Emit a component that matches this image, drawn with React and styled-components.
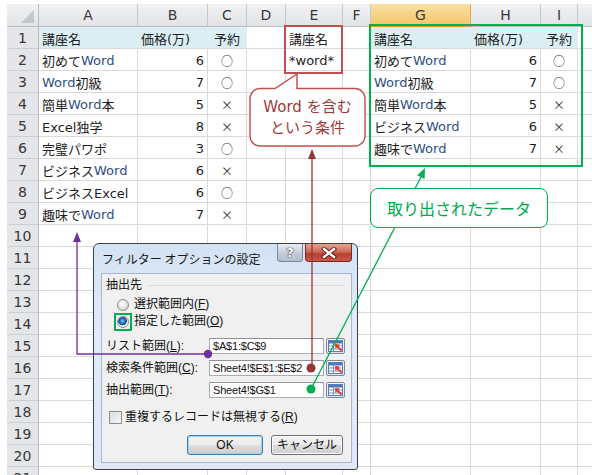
import React from 'react';
import styled, { createGlobalStyle } from 'styled-components';

const GlobalStyle = createGlobalStyle`
  html, body {
    margin: 0;
    padding: 0;
    background: #fff;
  }
  body {
    font-family: "DejaVu Sans", "Noto Sans CJK JP", sans-serif;
  }
`;

const columns = ['A', 'B', 'C', 'D', 'E', 'F', 'G', 'H', 'I', 'J'];

const sheet = {
  1: { A: '講座名', B: '価格(万)', C: '予約', E: '講座名', G: '講座名', H: '価格(万)', I: '予約' },
  2: { A: '初めてWord', B: '6', C: '○', E: '*word*', G: '初めてWord', H: '6', I: '○' },
  3: { A: 'Word初級', B: '7', C: '○', G: 'Word初級', H: '7', I: '○' },
  4: { A: '簡単Word本', B: '5', C: '×', G: '簡単Word本', H: '5', I: '×' },
  5: { A: 'Excel独学', B: '8', C: '×', G: 'ビジネスWord', H: '6', I: '×' },
  6: { A: '完璧パワポ', B: '3', C: '○', G: '趣味でWord', H: '7', I: '×' },
  7: { A: 'ビジネスWord', B: '6', C: '×' },
  8: { A: 'ビジネスExcel', B: '6', C: '○' },
  9: { A: '趣味でWord', B: '7', C: '×' },
};

const tableCols = { A: true, B: true, C: true, G: true, H: true, I: true };
const markCols = { C: true, I: true };
const numberCols = { B: true, H: true };

const fields = [
  { label: 'リスト範囲', key: 'L', value: '$A$1:$C$9' },
  { label: '検索条件範囲', key: 'C', value: 'Sheet4!$E$1:$E$2' },
  { label: '抽出範囲', key: 'T', value: 'Sheet4!$G$1' },
];

// formats "Word" the way the sheet shows it
const CellText = ({ text }) =>
  text.split(/(Word)/).map((part, i) =>
    part === 'Word' ? <WordPart key={i}>{part}</WordPart> : <span key={i}>{part}</span>
  );

const cellAlign = (col, row) => {
  if (markCols[col]) return 'center';
  if (numberCols[col] && row > 1) return 'flex-end';
  return 'flex-start';
};

const Spreadsheet = () => {
  const rows = Array.from({ length: 21 }, (_, i) => i + 1);
  return (
    <Sheet>
      <Corner />
      {columns.map((c) => (
        <ColHeader key={c} $active={c === 'G'}>{c}</ColHeader>
      ))}
      {rows.map((r) => (
        <React.Fragment key={r}>
          <RowHeader>{r}</RowHeader>
          {columns.map((c) => {
            const value = sheet[r] && sheet[r][c];
            const filled = r === 1 && tableCols[c];
            return (
              <Cell key={c} $align={cellAlign(c, r)} $filled={filled}>
                {value && (markCols[c] && r > 1
                  ? <Mark>{value}</Mark>
                  : <CellText text={value} />)}
              </Cell>
            );
          })}
        </React.Fragment>
      ))}
    </Sheet>
  );
};

const RangeIcon = () => (
  <svg width="15" height="12" viewBox="0 0 15 12">
    <rect x="0.5" y="0.5" width="14" height="11" fill="#fff" stroke="#5b7fb8" />
    <rect x="1" y="1" width="13" height="2.5" fill="#4d78c0" />
    <line x1="1" y1="6" x2="14" y2="6" stroke="#6f93cc" />
    <line x1="1" y1="9" x2="14" y2="9" stroke="#6f93cc" />
    <line x1="5.5" y1="3" x2="5.5" y2="11.5" stroke="#6f93cc" />
    <path d="M8 5 L13.5 10.5" stroke="#e0402a" strokeWidth="2" />
    <path d="M7 4 L12 4.5 L7.5 9 Z" fill="#e0402a" />
  </svg>
);

const FilterDialog = () => (
  <Dialog>
    <TitleBar>
      <TitleText>フィルター オプションの設定</TitleText>
      <TitleButtons>
        <HelpButton>?</HelpButton>
        <CloseButton>
          <svg width="16" height="12" viewBox="0 0 16 12">
            <path d="M3 2 L13 10 M13 2 L3 10" stroke="#5a1d16" strokeWidth="4.2" strokeLinecap="square" />
            <path d="M3 2 L13 10 M13 2 L3 10" stroke="#fff" strokeWidth="2.4" strokeLinecap="square" />
          </svg>
        </CloseButton>
      </TitleButtons>
    </TitleBar>
    <DialogBody>
      <Legend>
        <span>抽出先</span>
        <LegendRule />
      </Legend>
      <RadioList>
        <RadioRow>
          <Radio />
          <span>選択範囲内(<u>F</u>)</span>
        </RadioRow>
        <RadioRow>
          <Radio $checked $highlight />
          <span>指定した範囲(<u>O</u>)</span>
        </RadioRow>
      </RadioList>
      <Fields>
        {fields.map((f) => (
          <FieldRow key={f.key}>
            <FieldLabel>
              {f.label}(<u>{f.key}</u>):
            </FieldLabel>
            <RangeInput>{f.value}</RangeInput>
            <RangeButton>
              <RangeIcon />
            </RangeButton>
          </FieldRow>
        ))}
      </Fields>
      <CheckRow>
        <Checkbox />
        <span>重複するレコードは無視する(<u>R</u>)</span>
      </CheckRow>
      <ButtonRow>
        <PushButton $primary>OK</PushButton>
        <PushButton>キャンセル</PushButton>
      </ButtonRow>
    </DialogBody>
  </Dialog>
);

const Connectors = () => (
  <Lines width="592" height="475" viewBox="0 0 592 475">
    <polyline points="208,354 77,354 77,241" fill="none" stroke="#7030a0" strokeWidth="1.3" />
    <path d="M77 232 L73 242 L81 242 Z" fill="#7030a0" />
    <circle cx="208" cy="354" r="4.2" fill="#7030a0" />

    <line x1="312" y1="368" x2="312" y2="158" stroke="#953735" strokeWidth="1.3" />
    <path d="M312 149 L308 159 L316 159 Z" fill="#953735" />
    <circle cx="311" cy="368" r="4.5" fill="#953735" />

    <line x1="311" y1="389" x2="421" y2="177" stroke="#00b050" strokeWidth="1.3" />
    <path d="M425 168 L424.6 179 L417.2 175.2 Z" fill="#00b050" />
    <circle cx="311" cy="389" r="4.5" fill="#00b050" />
  </Lines>
);

export default function App() {
  return (
    <>
      <GlobalStyle />
      <Page>
        <Spreadsheet />
        <CriteriaBox />
        <ResultBox />
        <FilterDialog />
        <Connectors />
        <ConditionCallout>
          <svg width="120" height="78" viewBox="0 0 120 78">
            <path
              d="M11 16.5 H26 L48 2 V16.5 H106 A10 10 0 0 1 116 26.5 V64 A10 10 0 0 1 106 74 H11 A10 10 0 0 1 1 64 V26.5 A10 10 0 0 1 11 16.5 Z"
              fill="#fff"
              stroke="#c0504d"
              strokeWidth="1.4"
            />
          </svg>
          <CalloutText>
            <div>Word を含む</div>
            <div>という条件</div>
          </CalloutText>
        </ConditionCallout>
        <ResultCallout>取り出されたデータ</ResultCallout>
      </Page>
    </>
  );
}

const Page = styled.div`
  position: relative;
  width: 592px;
  height: 475px;
  overflow: hidden;
  padding: 4px 0 0 7px;
  box-sizing: border-box;
  background: #fff;
`;

const Sheet = styled.div`
  display: grid;
  grid-template-columns: 32px 99px 70px 39px 39px 57px 28px 100px 70px 37px 80px;
  grid-template-rows: 23px repeat(21, 22px);
  font-size: 13px;
  color: #1e1e1e;
`;

const Corner = styled.div`
  position: relative;
  background: linear-gradient(#f0f1f3, #e2e4e7);
  border-right: 1px solid #b9bdc2;
  border-bottom: 1px solid #b9bdc2;

  &::after {
    content: '';
    position: absolute;
    right: 4px;
    bottom: 3px;
    border-style: solid;
    border-width: 0 0 13px 13px;
    border-color: transparent transparent #c4c7cb transparent;
  }
`;

const ColHeader = styled.div`
  display: flex;
  align-items: center;
  justify-content: center;
  box-sizing: border-box;
  font-size: 14px;
  color: #383838;
  background: ${(p) => (p.$active ? 'linear-gradient(#fae0a6, #f4c567)' : 'linear-gradient(#f1f2f4, #e1e3e6)')};
  border-right: 1px solid ${(p) => (p.$active ? '#e1a94f' : '#c6c9cd')};
  border-bottom: 1px solid ${(p) => (p.$active ? '#e29a35' : '#b9bdc2')};
`;

const RowHeader = styled.div`
  display: flex;
  align-items: center;
  justify-content: center;
  box-sizing: border-box;
  font-size: 14px;
  color: #383838;
  background: #e4e6e9;
  border-right: 1px solid #b9bdc2;
  border-bottom: 1px solid #cbced2;
`;

const Cell = styled.div`
  display: flex;
  align-items: center;
  justify-content: ${(p) => p.$align};
  box-sizing: border-box;
  padding: 1px 3px 0 3px;
  white-space: nowrap;
  overflow: hidden;
  background: ${(p) => (p.$filled ? '#daeef3' : '#fff')};
  border-right: 1px solid ${(p) => (p.$filled ? '#daeef3' : '#d9d9d9')};
  border-bottom: 1px solid #d9d9d9;
`;

const WordPart = styled.span`
  color: #2f4f86;
`;

const Mark = styled.span`
  font-family: "Noto Sans CJK JP", sans-serif;
  font-size: 12px;
  color: #333;
`;

const CriteriaBox = styled.div`
  position: absolute;
  left: 284px;
  top: 25px;
  width: 59px;
  height: 49px;
  box-sizing: border-box;
  border: 2px solid #c0504d;
`;

const ResultBox = styled.div`
  position: absolute;
  left: 369px;
  top: 24px;
  width: 214px;
  height: 143px;
  box-sizing: border-box;
  border: 2px solid #00b050;
`;

const Dialog = styled.div`
  position: absolute;
  left: 93px;
  top: 243px;
  width: 265px;
  height: 227px;
  box-sizing: border-box;
  display: flex;
  flex-direction: column;
  border: 1px solid #3d4148;
  border-radius: 6px 6px 3px 3px;
  background: linear-gradient(#d3e2f4, #e2ecf8 40%, #dce8f6);
  font-family: "Liberation Sans", "Noto Sans CJK JP", sans-serif;
  font-size: 12px;
  color: #111;
  z-index: 2;
`;

const TitleBar = styled.div`
  height: 29px;
  display: flex;
  align-items: flex-start;
  justify-content: space-between;
  padding-left: 8px;
`;

const TitleText = styled.div`
  font-family: "Noto Sans CJK JP", sans-serif;
  font-size: 12px;
  line-height: 29px;
  color: #1a1a1a;
`;

const TitleButtons = styled.div`
  display: flex;
  gap: 2px;
  margin-right: 5px;
`;

const HelpButton = styled.div`
  width: 26px;
  height: 18px;
  box-sizing: border-box;
  display: flex;
  align-items: center;
  justify-content: center;
  border: 1px solid #7b889a;
  border-top: none;
  border-radius: 0 0 4px 4px;
  background: linear-gradient(#e9eef5, #c3ccd8 55%, #b4bfcd);
  font-family: "DejaVu Sans", sans-serif;
  font-weight: bold;
  font-size: 13px;
  color: #fff;
  text-shadow: 0 0 1px #334, 0 0 1px #334, 0 0 1px #334;
`;

const CloseButton = styled.div`
  width: 47px;
  height: 18px;
  box-sizing: border-box;
  display: flex;
  align-items: center;
  justify-content: center;
  border: 1px solid #7a2a20;
  border-top: none;
  border-radius: 0 0 4px 4px;
  background: linear-gradient(#e6a294, #cf6a58 45%, #b8402e 60%, #c95a45);
`;

const DialogBody = styled.div`
  flex: 1;
  margin: 0 5px 6px 7px;
  padding: 4px 8px 0 4px;
  display: flex;
  flex-direction: column;
  border: 1px solid #a9b8ca;
  background: #f0f0f0;
  font-family: "Liberation Sans", "Noto Sans CJK JP", sans-serif;
`;

const Legend = styled.div`
  height: 14px;
  display: flex;
  align-items: center;
  gap: 6px;
  line-height: 14px;
`;

const LegendRule = styled.div`
  flex: 1;
  height: 1px;
  margin-right: -2px;
  background: #d5dbe2;
`;

const RadioList = styled.div`
  margin-top: 4px;
  padding-left: 11px;
  display: flex;
  flex-direction: column;
`;

const RadioRow = styled.div`
  height: 17px;
  display: flex;
  align-items: center;
  gap: 5px;
  line-height: 17px;
  white-space: nowrap;
`;

const Radio = styled.span`
  position: relative;
  flex: none;
  width: 12px;
  height: 12px;
  box-sizing: border-box;
  border-radius: 50%;
  border: 1px solid #8e8f8f;
  background: ${(p) =>
    p.$checked
      ? 'radial-gradient(circle at 45% 40%, #8fd0ff 0, #2a7fd0 2px, #124d8e 4px, #e8e8e8 4.6px, #f4f4f4 6px)'
      : 'radial-gradient(circle at 40% 35%, #ffffff, #d8d8d8 70%, #c8c8c8)'};

  &::after {
    content: '';
    display: ${(p) => (p.$highlight ? 'block' : 'none')};
    position: absolute;
    left: -4px;
    top: -4px;
    width: 18px;
    height: 18px;
    box-sizing: border-box;
    border: 2px solid #00b050;
  }
`;

const Fields = styled.div`
  margin-top: 5px;
  display: flex;
  flex-direction: column;
`;

const FieldRow = styled.div`
  height: 22px;
  display: grid;
  grid-template-columns: 101px 115px 19px;
  column-gap: 2px;
  align-items: center;
  margin-right: -2px;
`;

const FieldLabel = styled.div`
  line-height: 16px;
  white-space: nowrap;
`;

const RangeInput = styled.div`
  height: 16px;
  box-sizing: border-box;
  padding-left: 3px;
  border: 1px solid #abadb3;
  border-top-color: #8f949c;
  background: #fff;
  font-family: "Liberation Sans", sans-serif;
  font-size: 11px;
  letter-spacing: -0.2px;
  line-height: 14px;
  white-space: nowrap;
  overflow: hidden;
`;

const RangeButton = styled.div`
  height: 16px;
  box-sizing: border-box;
  display: flex;
  align-items: center;
  justify-content: center;
  border: 1px solid #7d8a99;
  border-radius: 2px;
  background: linear-gradient(#f7f9fb, #dfe5ec);
`;

const CheckRow = styled.div`
  margin-top: 9px;
  margin-left: 3px;
  height: 14px;
  display: flex;
  align-items: center;
  gap: 3px;
  line-height: 14px;
  white-space: nowrap;
`;

const Checkbox = styled.span`
  flex: none;
  width: 13px;
  height: 13px;
  box-sizing: border-box;
  border: 1px solid #8e8f8f;
  background: linear-gradient(135deg, #dcdcdc, #f6f6f6);
`;

const ButtonRow = styled.div`
  margin-top: 11px;
  display: flex;
  justify-content: flex-end;
  gap: 8px;
`;

const PushButton = styled.div`
  width: ${(p) => (p.$primary ? '76px' : '72px')};
  height: 20px;
  box-sizing: border-box;
  display: flex;
  align-items: center;
  justify-content: center;
  border: 1px solid ${(p) => (p.$primary ? '#3c7fb1' : '#707070')};
  border-radius: 3px;
  background: linear-gradient(#f3f3f3, #ebebeb 48%, #dddddd 52%, #cfcfcf);
  box-shadow: ${(p) => (p.$primary ? 'inset 0 0 0 1px #9fd3f5' : 'inset 0 0 0 1px #fcfcfc')};
  font-size: 12px;
  line-height: 18px;
`;

const Lines = styled.svg`
  position: absolute;
  left: 0;
  top: 0;
  pointer-events: none;
  z-index: 3;
`;

const ConditionCallout = styled.div`
  position: absolute;
  left: 249px;
  top: 72px;
  width: 120px;
  height: 78px;
  z-index: 4;

  & > svg {
    position: absolute;
    left: 0;
    top: 0;
  }
`;

const CalloutText = styled.div`
  position: absolute;
  left: 1px;
  top: 17px;
  width: 115px;
  height: 57px;
  display: flex;
  flex-direction: column;
  justify-content: center;
  align-items: center;
  font-family: "DejaVu Sans", "Noto Sans CJK JP", sans-serif;
  font-size: 15px;
  line-height: 21px;
  color: #9b3a39;
`;

const ResultCallout = styled.div`
  position: absolute;
  left: 370px;
  top: 188px;
  width: 178px;
  height: 40px;
  box-sizing: border-box;
  display: flex;
  align-items: center;
  justify-content: center;
  border: 1.4px solid #00b050;
  border-radius: 8px;
  background: #fff;
  font-family: "Noto Sans CJK JP", sans-serif;
  font-size: 16px;
  color: #00a84c;
  z-index: 4;
`;
